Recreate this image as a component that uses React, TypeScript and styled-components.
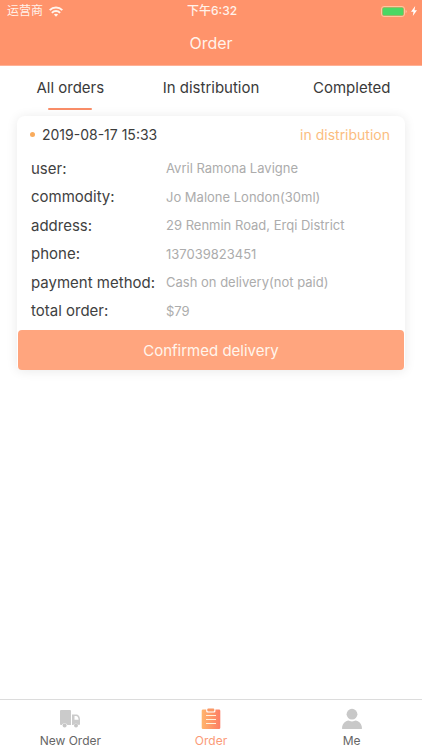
import React, { useState } from "react";
import styled, { createGlobalStyle } from "styled-components";

const GlobalStyle = createGlobalStyle`
  *, *::before, *::after { box-sizing: border-box; }
  body { margin: 0; background: #fff; }
  button { font: inherit; border: 0; background: none; padding: 0; cursor: pointer; }
`;

const Screen = styled.div`
  min-height: 100vh;
  display: flex;
  flex-direction: column;
  font-family: Inter, "Noto Sans CJK SC", sans-serif;
  color: #3c3c3c;
  background: #fff;
`;

const Header = styled.header`
  background: #ff936b;
  color: #fff2ea;
  padding-bottom: 1px;
  border-bottom: 1px solid #ffb196;
`;

const StatusBar = styled.div`
  height: 22px;
  padding: 0 5px 0 7px;
  display: grid;
  grid-template-columns: 1fr auto 1fr;
  align-items: center;
  font-size: 12px;
  line-height: 22px;
`;

const StatusSide = styled.div<{ $end?: boolean }>`
  display: flex;
  align-items: center;
  gap: ${(p) => (p.$end ? 4 : 6)}px;
  justify-content: ${(p) => (p.$end ? "flex-end" : "flex-start")};
`;

const Clock = styled.time`
  font-weight: 500;
`;

const Title = styled.h1`
  margin: 0;
  height: 42px;
  font-size: 16px;
  font-weight: 400;
  line-height: 43px;
  text-align: center;
`;

const Tabs = styled.nav`
  display: grid;
  grid-template-columns: repeat(3, 1fr);
`;

const Tab = styled.button<{ $active: boolean }>`
  && { font-size: 15px; }
  height: 44px;
  display: flex;
  flex-direction: column;
  align-items: center;
  justify-content: space-between;
  && { line-height: 44px; }
  color: #3a3a3a;

  span { height: 42px; }

  &::after {
    content: "";
    width: 44px;
    height: 2px;
    border-radius: 1px;
    background: ${(p) => (p.$active ? "#fa8e68" : "transparent")};
  }
`;

const Main = styled.main`
  flex: 1;
  padding: 6px 17px;
`;

const Card = styled.article`
  padding: 0 1px;
  border-radius: 8px 8px 5px 5px;
  background: #fff;
  box-shadow: 0 1px 12px rgba(0, 0, 0, 0.09);
`;

const CardHead = styled.div`
  display: flex;
  align-items: center;
  height: 38px;
  padding: 0 14px 2px 12px;
  font-size: 14px;
`;

const Dot = styled.i`
  width: 5px;
  height: 5px;
  margin-right: 7px;
  border-radius: 50%;
  background: #f9ab5c;
`;

const State = styled.span`
  margin-left: auto;
  color: #fbbd80;
`;

const Details = styled.dl`
  margin: 0;
  height: 176px;
  padding: 0 13px 5px;
  display: flex;
  flex-direction: column;
`;

const Detail = styled.div`
  flex: 1;
  display: flex;
  align-items: center;
`;

const Term = styled.dt`
  flex: 0 0 135px;
  white-space: nowrap;
  font-size: 15px;
  color: #414141;
`;

const Value = styled.dd`
  margin: 0;
  font-size: 13px;
  color: #acacac;
`;

const Confirm = styled.button`
  && { font-size: 15px; }
  display: block;
  width: 100%;
  height: 40px;
  border-radius: 4px;
  background: #ffa57e;
  color: #fff5ec;
`;

const TabBar = styled.nav`
  display: grid;
  grid-template-columns: repeat(3, 1fr);
  height: 51px;
  border-top: 1px solid #dcdcdc;
  background: #fff;
`;

const BarLink = styled.a<{ $active?: boolean }>`
  display: flex;
  flex-direction: column;
  align-items: center;
  padding-top: 8px;
  gap: 3px;
  font-size: 12px;
  line-height: 16px;
  text-decoration: none;
  color: ${(p) => (p.$active ? "#fb9b78" : "#666")};

  svg { display: block; }
`;

const WifiIcon = () => (
  <svg width="14" height="11" viewBox="0 0 14 11" fill="none" stroke="#fff4ed" strokeWidth="2" aria-hidden="true">
    <path d="M.7 4.100C4.200.5 9.800.5 13.300 4.100" />
    <path d="M2.900 6.900C5.200 4.500 8.800 4.500 11.100 6.900" />
    <path d="M7 10.700 4.900 8.600C6.100 7.500 7.900 7.500 9.100 8.600Z" fill="#fff4ed" stroke="none" />
  </svg>
);

const BatteryIcon = () => (
  <svg width="26" height="11" viewBox="0 0 26 11" aria-hidden="true">
    <rect x=".5" y=".5" width="23" height="10" rx="2.5" fill="none" stroke="#ffc79f" />
    <rect x="1.500" y="1.500" width="21" height="8" rx="1.500" fill="#4bd763" />
    <path d="M24.700 4c1.200.5 1.200 2.500 0 3z" fill="#ffd0b4" />
  </svg>
);

const BoltIcon = () => (
  <svg width="6" height="10" viewBox="0 0 6 10" aria-hidden="true">
    <path d="M4.200 0 0 5.700h2.500L1.800 10 6 4.200H3.500z" fill="#fff" />
  </svg>
);

const TruckIcon = () => (
  <svg width="22" height="22" viewBox="0 0 22 22" aria-hidden="true">
    <path
      d="M2 2h9a1 1 0 0 1 1 1v14H8.400a3.100 3.100 0 0 0-5.600 0H2a1 1 0 0 1-1-1V3a1 1 0 0 1 1-1z"
      fill="#cbcbcb"
    />
    <path
      d="M13 6.500h4.300c2.400 0 3.700 2.500 3.700 5V16a1 1 0 0 1-1 1h-.4a3 3 0 0 0-5.300 0H13zM15.500 8v3.700h4.100C19.400 9.700 18.500 8 17 8z"
      fill="#cbcbcb"
      fillRule="evenodd"
    />
    <circle cx="5.600" cy="17.500" r="2" fill="#c6c6c6" />
    <circle cx="17" cy="17.500" r="2" fill="#c6c6c6" />
  </svg>
);

const ClipboardIcon = () => (
  <svg width="22" height="22" viewBox="0 0 22 22" aria-hidden="true">
    <defs>
      <linearGradient id="clip" x1="0" y1="0" x2="1" y2="0">
        <stop offset="0" stopColor="#ffb56c" />
        <stop offset="1" stopColor="#fd7d65" />
      </linearGradient>
    </defs>
    <path
      d="M3 1.500h3.200v1.700a1.300 1.300 0 0 0 1.300 1.300h6.600a1.300 1.300 0 0 0 1.300-1.300V1.500H19a1.300 1.300 0 0 1 1.300 1.300v17a1.300 1.300 0 0 1-1.300 1.300H3a1.300 1.300 0 0 1-1.300-1.300v-17A1.300 1.300 0 0 1 3 1.500z"
      fill="url(#clip)"
    />
    <rect x="7.300" y=".6" width="7" height="2.900" rx="1" fill="#fa9865" />
    <path d="M6 7.500h10M6 11.500h10M6 15.500h10" stroke="#fff1dc" strokeWidth="1.200" />
  </svg>
);

const PersonIcon = () => (
  <svg width="22" height="22" viewBox="0 0 22 22" fill="#c8c8c8" aria-hidden="true">
    <circle cx="11" cy="6.200" r="5.400" />
    <path d="M1 20.500c0-3.200 1.400-5.900 4.100-7.200.9-.5 1.600-.8 2.400-.8.9 0 1.700 1 3.500 1s2.600-1 3.500-1c.8 0 1.500.3 2.400.8 2.700 1.300 4.100 4 4.100 7.200 0 .3-.2.500-.5.500h-19c-.3 0-.5-.2-.5-.5z" />
  </svg>
);

const tabs = ["All orders", "In distribution", "Completed"];

const details = [
  ["user:", "Avril Ramona Lavigne"],
  ["commodity:", "Jo Malone London(30ml)"],
  ["address:", "29 Renmin Road, Erqi District"],
  ["phone:", "137039823451"],
  ["payment method:", "Cash on delivery(not paid)"],
  ["total order:", "$79"],
];

export default function App() {
  const [active, setActive] = useState(0);

  return (
    <Screen>
      <GlobalStyle />
      <Header>
        <StatusBar>
          <StatusSide>
            运营商
            <WifiIcon />
          </StatusSide>
          <Clock>下午6:32</Clock>
          <StatusSide $end>
            <BatteryIcon />
            <BoltIcon />
          </StatusSide>
        </StatusBar>
        <Title>Order</Title>
      </Header>
      <Tabs>
        {tabs.map((label, i) => (
          <Tab key={label} $active={i === active} onClick={() => setActive(i)}>
            <span>{label}</span>
          </Tab>
        ))}
      </Tabs>
      <Main>
        <Card>
          <CardHead>
            <Dot />
            <time>2019-08-17 15:33</time>
            <State>in distribution</State>
          </CardHead>
          <Details>
            {details.map(([term, value]) => (
              <Detail key={term}>
                <Term>{term}</Term>
                <Value>{value}</Value>
              </Detail>
            ))}
          </Details>
          <Confirm>Confirmed delivery</Confirm>
        </Card>
      </Main>
      <TabBar>
        <BarLink href="#new">
          <TruckIcon />
          New Order
        </BarLink>
        <BarLink href="#order" $active>
          <ClipboardIcon />
          Order
        </BarLink>
        <BarLink href="#me">
          <PersonIcon />
          Me
        </BarLink>
      </TabBar>
    </Screen>
  );
}
